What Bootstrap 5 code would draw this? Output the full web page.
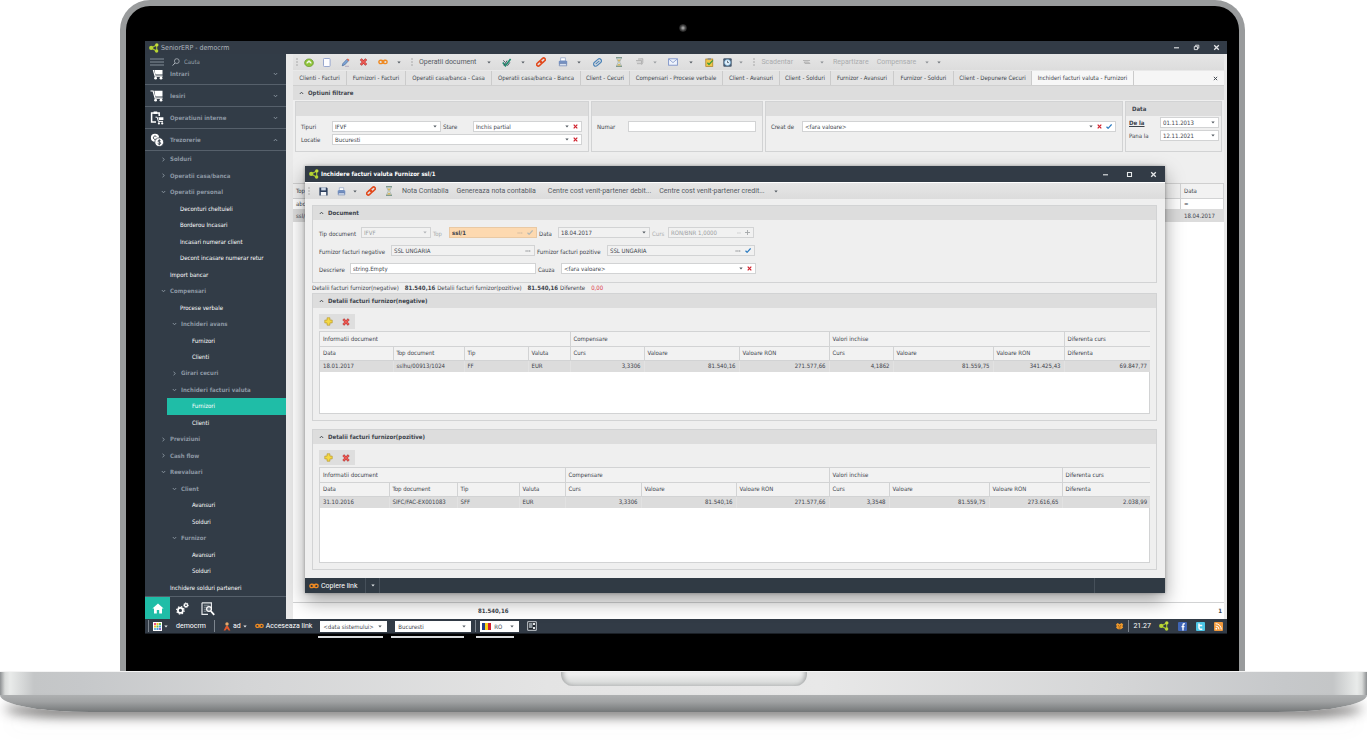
<!DOCTYPE html>
<html lang="ro">
<head>
<meta charset="utf-8">
<meta name="viewport" content="width=device-width, initial-scale=1">
<title>SeniorERP - democrm</title>
<link href="https://cdn.jsdelivr.net/npm/bootstrap@5.3.0/dist/css/bootstrap.min.css" rel="stylesheet">
<style>
:root{--ink:#3c434b;--dark:#323b46;--panel:#efefef;--head:#dddddd;--line:#d2d3d4;--teal:#1fbda7}
body{background:#fff;font-family:"DejaVu Sans Condensed","DejaVu Sans",sans-serif;font-size:6px;line-height:10px;color:var(--ink);overflow-x:hidden}
svg{display:block;flex:none}
button,a.plain{color:inherit;text-decoration:none}
.bare{border:0;background:none;padding:0;font:inherit;color:inherit;display:flex;align-items:center;justify-content:center;flex:none;white-space:nowrap}
.tight{gap:2px}
/* laptop */
.lid{margin:0 122px 0 120px;background:#000;border:6px solid #999b9c;border-bottom:0;border-radius:30px 30px 0 0;padding-bottom:33px}
.bezel{height:35px}
.camera{width:8px;height:8px;border-radius:50%;border:1px solid #2b2b2b;background:radial-gradient(#9a9a9a 0 20%,#555 50%,#333)}
.screen{height:597px;margin:0 12px 0 19px}
.shellrow{min-height:0}
.deck{height:24px;background:linear-gradient(90deg,#8d9092 0,#d9dbda 5px,#e9ebea 10px,#c4c6c7 34px,#c6c8ca 6%,#d4d5d6 18%,#e4e4e4 40%,#e8e8e8 60%,#d4d5d6 82%,#c6c8ca 94%,#c4c6c7 calc(100% - 34px),#e9ebea calc(100% - 10px),#d9dbda calc(100% - 5px),#8d9092 100%);border-top:1px solid #f4f4f4}
.notch{width:246px;height:14px;border-radius:0 0 12px 12px;background:linear-gradient(#f4f4f4,#dcdedd 70%,#c3c5c5);box-shadow:inset 6px 0 5px -4px #a2a4a5,inset -6px 0 5px -4px #a2a4a5}
.foot{height:17px;border-radius:0 0 90px 90px/0 0 17px 17px;background:linear-gradient(#aeb0b1,#a0a2a3 40%,#747778);box-shadow:0 8px 12px -4px rgba(40,38,36,.8),0 20px 20px -8px rgba(110,110,110,.3);margin-bottom:41px}
/* shell */
.titlebar{height:13px;background:var(--dark);color:#aeb5bd;font-size:7px;padding:0 1px 0 4px}
.winctl{width:20px;height:13px;color:#e6e8ea}
.side{width:141px;background:#323c47;color:#8c97a3;flex:none}
.findbox{height:16px;padding:0 5px}
.findbox input{background:none;border:0;color:#aab2bb;width:80px;padding:0;font:inherit;outline:0}
.findbox input::placeholder{color:#98a1ab;opacity:1}
.mods{list-style:none;margin:0;padding:0;overflow:hidden}
.mods a{height:22px;border-bottom:1px solid #56606b;padding:0 8px 0 5px;font-weight:700}
.mods li:first-child{height:15px;display:flex;flex-direction:column;justify-content:flex-end;overflow:hidden}
.mods li:first-child a{flex:none}
.mods .lbl{margin-left:6px}
.tree{list-style:none;margin:0;padding:0;display:grid;grid-auto-rows:1fr;flex:1 1 0;min-height:0}
.tree a{display:flex;align-items:center;height:100%;color:#fff;padding-left:25px;font-size:6px}
.tree .l2{padding-left:35px}.tree .l3{padding-left:47px}
.tree .grp{color:#8c97a3;font-weight:700;padding-left:16px}
.tree .grp.l2{padding-left:27px}
.tree .grp svg{margin-right:4px}
.tree .on{background:var(--teal);margin-left:22px;padding-left:25px}
.sidefoot{height:23px;border-top:1px solid #56606b}
.sidefoot .home{width:25px;height:23px;background:var(--teal)}
.sidefoot button{width:25px;height:23px}
/* main */
.main{background:#e9e9e9;position:relative;min-width:0;padding:0 3px 0 7px}
.tbar{height:16px;background:linear-gradient(#e6e6e6,#dcdcdc);color:#555b62}
.tbar,.dfoot,.status{font-family:Roboto,sans-serif;font-size:7px}
.s10{width:10px}.s14{width:14px}.s18{width:18px}.s22{width:22px}.s26{width:26px}
.grip{width:7px;height:8px;background:radial-gradient(circle,#a9a9a9 1px,transparent 1px) center/2px 3px;background-repeat:repeat-y;flex:none}
.off{color:#aaacae}
.tabs{height:15px;background:#f6f6f6;border-bottom:1px solid #cfcfcf;margin-top:1px}
.tabs button{background:#e3e3e3;border-right:1px solid #cbcbcb;height:14px}
.tabs .on{background:#f7f7f7}
.t49{width:49px}.t51{width:51px}.t54{width:54px}.t57{width:57px}.t59{width:59px}.t60{width:60px}.t63{width:63px}.t78{width:78px}.t86{width:86px}.t89{width:89px}.t93{width:93px}.t102{width:102px}
.ghead{height:14px;background:var(--head);font-weight:700;padding:0 6px}
.ghead svg{margin-right:4px}
.filters{background:var(--panel);height:84px;padding:1px 2px 0;gap:2px;border-bottom:1px solid #cfcfcf}
.box{border:1px solid var(--line);background:var(--panel);height:51px}
.w294{width:294px}.w172{width:172px}.w97{width:97px}
.box .rows{padding:5px 6px 0 5px;gap:2px}
.box.w97 .rows{padding:1px 2px 0 3px}
.fld{height:11px;background:#fff;border:1px solid var(--line);min-width:0;padding:0 3px 0 1px;gap:4px}
.fld .form-control,.fld .form-select{border:0;border-radius:0;background:none;padding:0 0 0 1px;margin:0;height:9px;min-height:0;line-height:9px;font:inherit;color:inherit;box-shadow:none;flex:1 1 0;min-width:0;width:auto}
.fld.ro{background:#f1f1f1}.fld.dis{background:#f1f1f1;color:#9b9ea1}
.fld.hot{background:#fdd9b0;border-color:#e9c9a4}
.f31{width:31px;flex:none}.f32{width:32px;padding-left:2px;flex:none}.d109{width:109px;flex:none}
/* background list */
.grid{width:100%;table-layout:fixed;margin:0;border-collapse:collapse;color:inherit}
.grid th,.grid td{font-weight:400;padding:0 3px;border-right:1px solid var(--line);white-space:nowrap;overflow:hidden;line-height:10px}
.grid th{background:#f2f2f2;border-bottom:1px solid var(--line)}
.list thead th{height:14px}.list td{height:11px;background:#fff}.list .pick td{background:#dcdcdc;height:13px;border-color:#dcdcdc}
.list .cdate{width:43px}
.total{height:17px;border-top:1px solid var(--line);background:#fff;font-weight:700;padding:0 2px 0 185px}
/* dialog */
.dlg{position:absolute;top:112px;left:19px;right:62px;bottom:26px;background:var(--panel);box-shadow:0 8px 18px rgba(0,0,0,.38),0 0 3px rgba(0,0,0,.3)}
.dtitle{height:17px;background:var(--dark);color:#fff;font-weight:700;padding:0 0 0 4px;border-bottom:1px solid #fff}
.dtitle .winctl{width:24px;height:16px}
.dbody{padding:6px 8px 8px 7px;min-height:0}
.card2{border:1px solid var(--line)}
.neg{height:128px}
.docform{padding:7px 6px 8px 6px;width:444px;gap:7px}
.docform label{padding-top:2px;flex:none;white-space:nowrap}
.docform .r{height:11px;gap:2px}
.docform .fld{flex:none}
.d70{width:70px}.d88{width:88px}.d92{width:92px}.d86{width:86px}.d144{width:144px}.d148{width:148px}.d186{width:186px}.d195{width:195px}
.l40{width:40px}.l14{width:14px}.l17{width:17px}.l70{width:70px}.l68{width:68px}.l29{width:29px}.l21{width:21px}
.sum{height:10px;gap:2px}
.sum b{margin-left:4px}
.addbar{width:36px;height:15px;background:#dedede;margin:6px 0 2px 6px}
.sheet{border:1px solid var(--line);background:#fff;margin:0 6px 6px}
.sheet .grid th{height:14px}
.sheet .grid td{height:12px;background:#dcdcdc;border-color:#e2e2e2}
.sheet .grid tr>:last-child{border-right:0}
.c73{width:73px}.c71{width:71px}.c64{width:64px}.c42{width:42px}.c74{width:74px}.c95{width:95px}.c90{width:90px}.c100{width:100px}.c86{width:86px}
.c69{width:69px}.c68{width:68px}.c62{width:62px}.c46{width:46px}.c76{width:76px}.c93{width:93px}.c60{width:60px}.c88{width:88px}
.dfoot{height:15px;background:#303a44;color:#fff;padding-left:4px}
.dfoot .cell{height:15px;border-right:1px solid #46505a}
.dfoot .tail{width:71px;height:15px;border-left:1px solid #46505a}
/* status bar */
.status{height:14px;background:var(--dark);color:#fff;padding-left:3px}
.status .fld{border-color:#fff;color:var(--ink);height:11px;flex:none;padding:0 4px 0 1px;gap:2px;font-family:"DejaVu Sans Condensed","DejaVu Sans",sans-serif;font-size:6px}
.bar1{width:1px;height:12px;background:#7d858e;flex:none}
.d67{width:67px}.d76{width:76px}.d39{width:39px}
.glow{height:5px;background:#000;padding:2px 0 0 173px;border-top:1px solid #1b2027}
.glow i{height:2px;background:#d6d8da}
.g65{width:65px}.g73{width:73px}.g38{width:38px}
</style>
</head>
<body>
<svg width="0" height="0" class="position-absolute" aria-hidden="true">
<symbol id="dn" viewBox="0 0 4 3"><path d="M.3 .6h3.400L2 2.500z" fill="#555c63"/></symbol>
<symbol id="dnw" viewBox="0 0 4 3"><path d="M.3 .6h3.400L2 2.500z" fill="#dfe3e6"/></symbol>
<symbol id="cu" viewBox="0 0 5 4"><path d="M.8 3L2.5 1.2 4.2 3" fill="none" stroke="currentColor" stroke-width=".9"/></symbol>
<symbol id="cd" viewBox="0 0 5 4"><path d="M.8 1L2.5 2.8 4.2 1" fill="none" stroke="currentColor" stroke-width=".9"/></symbol>
<symbol id="cr" viewBox="0 0 5 5"><path d="M1.5.8L3.4 2.5 1.5 4.2" fill="none" stroke="currentColor" stroke-width=".9"/></symbol>
<symbol id="x" viewBox="0 0 5 5"><path d="M.7.7l3.6 3.6M4.3.7L.7 4.3" stroke="#d0202c" stroke-width="1.2"/></symbol>
<symbol id="ok" viewBox="0 0 6 5"><path d="M.5 2.8L2.1 4.3 5.6.5" fill="none" stroke="#2a7ac0" stroke-width="1.2"/></symbol>
<symbol id="dots" viewBox="0 0 6 2"><path d="M.5 1h5" stroke="#7a7d80" stroke-width="1" stroke-dasharray="1.2 .6"/></symbol>
<symbol id="min" viewBox="0 0 7 7"><path d="M1 3.8h5" stroke="currentColor" stroke-width="1.1"/></symbol>
<symbol id="max" viewBox="0 0 7 7"><path d="M1.5 1.5h4v4h-4z" fill="none" stroke="currentColor" stroke-width="1.1"/></symbol>
<symbol id="rst" viewBox="0 0 7 7"><path d="M1.3 2.6h3.2v3H1.3zM2.6 2.4V1.2h3.2v3H4.7" fill="none" stroke="currentColor" stroke-width=".9"/></symbol>
<symbol id="cls" viewBox="0 0 7 7"><path d="M1.2 1.2l4.6 4.6M5.8 1.2L1.2 5.8" stroke="currentColor" stroke-width="1.3"/></symbol>
<symbol id="share" viewBox="0 0 10 10"><path d="M7.6 2L2.2 5l5.2 3M7.6 2l.2 6" fill="none" stroke="#a9c92c" stroke-width="1.1"/><circle cx="7.8" cy="1.9" r="1.7" fill="#c5de3c"/><circle cx="2.200" cy="4.9" r="2.100" fill="#b7d433"/><circle cx="7.6" cy="8" r="1.7" fill="#b7d433"/></symbol>
<symbol id="link" viewBox="0 0 10 6"><g fill="none" stroke="#ef8a22" stroke-width="1.4"><rect x=".9" y="1.2" width="4" height="3.4" rx="1.6"/><rect x="5.1" y="1.2" width="4" height="3.4" rx="1.6"/><path d="M3.4 2.9h3.2"/></g></symbol>
<symbol id="cart" viewBox="0 0 14 12"><path d="M.5 1h2.6l2 7.2h7.5" fill="none" stroke="#fff" stroke-width="1.2"/><path d="M4.3.8h8.2v5.8H5.4z" fill="#fff"/><circle cx="5.6" cy="10.2" r="1.4" fill="#fff"/><circle cx="11" cy="10.2" r="1.4" fill="#fff"/></symbol>
<symbol id="add" viewBox="0 0 9 9"><path d="M3.100.8h2.800v2.300h2.300v2.800H5.900v2.300H3.100V5.900H.8V3.100h2.300z" fill="#f5d944" stroke="#b89a34" stroke-width=".7"/></symbol>
<symbol id="del" viewBox="0 0 9 9"><path d="M1.4 1.4l6.2 6.2M7.6 1.4L1.4 7.6" stroke="#b03a3a" stroke-width="2.800"/><path d="M1.600 1.600l5.800 5.800M7.400 1.600L1.600 7.400" stroke="#ee5a52" stroke-width="1.700"/></symbol>
<symbol id="rlink" viewBox="0 0 10 10"><g transform="rotate(-42 5 5)" fill="none" stroke="#e2491c" stroke-width="1.6"><rect x="-.2" y="3.4" width="5.6" height="3.2" rx="1.6"/><rect x="4.6" y="3.4" width="5.6" height="3.2" rx="1.6"/></g></symbol>
<symbol id="prn" viewBox="0 0 10 10"><path d="M2.600.8h4.800v4H2.600z" fill="#fff" stroke="#8da0c4" stroke-width=".7"/><path d="M.8 4.200l1.400-.8h5.600l1.400.8v3.400H.8z" fill="#7490c0"/><path d="M1.800 6.600h6.400l.6 2.200H1.200z" fill="#dfe8f5" stroke="#5a72a2" stroke-width=".6"/></symbol>
<symbol id="hour" viewBox="0 0 8 10"><path d="M1 .7h6M1 9.3h6" stroke="#7d9a8c" stroke-width="1.2"/><path d="M1.6 1.2h4.8L4.6 5l1.8 3.8H1.6L3.4 5z" fill="#d8e6ea" stroke="#8f9d98" stroke-width=".6"/><path d="M2.4 2.6h3.2L4 4.9zM2 8.6L4 6.4l2 2.2z" fill="#d9b450"/></symbol>
<symbol id="glass" viewBox="0 0 8 8"><circle cx="4.8" cy="3.1" r="2.4" fill="none" stroke="#aeb5bd" stroke-width=".8"/><path d="M3 5L.6 7.6" stroke="#aeb5bd" stroke-width="1"/></symbol>
</svg>

<div class="lid">
  <div class="bezel d-flex justify-content-center align-items-center pt-2"><span class="camera"></span></div>
  <div class="screen d-flex flex-column">
    <header class="titlebar d-flex align-items-center tight">
      <svg width="10" height="10"><use href="#share"/></svg><span>SeniorERP - democrm</span>
      <div class="ms-auto d-flex">
      <button class="bare winctl" aria-label="Minimizeaza"><svg width="7" height="7"><use href="#min"/></svg></button>
      <button class="bare winctl" aria-label="Restaureaza"><svg width="7" height="7"><use href="#rst"/></svg></button>
      <button class="bare winctl" aria-label="Inchide"><svg width="7" height="7"><use href="#cls"/></svg></button>
      </div>
    </header>
    <div class="shellrow d-flex flex-grow-1">
      <nav class="side d-flex flex-column">
        <div class="findbox d-flex align-items-center flex-shrink-0">
          <svg width="14" height="8" viewBox="0 0 14 8"><path d="M0 1h14M0 4h14M0 7h14" stroke="#8f99a3" stroke-width=".9"/></svg>
          <svg class="ms-2 me-1" width="8" height="8"><use href="#glass"/></svg>
          <input type="search" placeholder="Cauta" aria-label="Cauta">
        </div>
        <ul class="mods flex-shrink-0">
          <li><a href="#" class="plain d-flex align-items-center"><svg width="14" height="12"><use href="#cart"/></svg><span class="lbl">Intrari</span><svg class="ms-auto" width="5" height="4"><use href="#cd"/></svg></a></li>
          <li><a href="#" class="plain d-flex align-items-center"><svg width="14" height="12"><use href="#cart"/></svg><span class="lbl">Iesiri</span><svg class="ms-auto" width="5" height="4"><use href="#cd"/></svg></a></li>
          <li><a href="#" class="plain d-flex align-items-center"><svg width="14" height="14" viewBox="0 0 14 14"><path d="M6 11H1.6V2h7.6v3" fill="none" stroke="#fff" stroke-width="1.5"/><path d="M3.6.5h3.6v2.4H3.6z" fill="#fff"/><path d="M5.500 6.200h1.700l1.200 4.200h4.600" fill="none" stroke="#fff" stroke-width="1"/><path d="M8.400 6.200h5v2.800H9z" fill="#fff"/><circle cx="8.9" cy="12.4" r="1.1" fill="#fff"/><circle cx="12.2" cy="12.4" r="1.1" fill="#fff"/></svg><span class="lbl">Operatiuni interne</span><svg class="ms-auto" width="5" height="4"><use href="#cd"/></svg></a></li>
          <li><a href="#" class="plain d-flex align-items-center"><svg width="14" height="14" viewBox="0 0 14 14"><circle cx="5" cy="4.8" r="4.1" fill="#fff"/><circle cx="9.2" cy="9.2" r="4.4" fill="#fff" stroke="#323c47" stroke-width=".8"/><path d="M6.4 3.6c-1.3-1.2-3-.4-3 1.1s1.2 2 2.2 1.5" fill="none" stroke="#323c47"/><path d="M10.7 7.8c-.9-.8-2.8-.7-2.7.4.1 1 2.7.7 2.7 2s-2.200 1.200-3 .2M9.300 6.300v6" fill="none" stroke="#323c47" stroke-width=".9"/></svg><span class="lbl">Trezorerie</span><svg class="ms-auto" width="5" height="4"><use href="#cu"/></svg></a></li>
        </ul>
        <ul class="tree">
          <li><a class="plain grp" href="#"><svg width="5" height="5"><use href="#cr"/></svg>Solduri</a></li>
          <li><a class="plain grp" href="#"><svg width="5" height="5"><use href="#cr"/></svg>Operatii casa/banca</a></li>
          <li><a class="plain grp" href="#"><svg width="5" height="4"><use href="#cd"/></svg>Operatii personal</a></li>
          <li><a class="plain l2" href="#">Deconturi cheltuieli</a></li>
          <li><a class="plain l2" href="#">Borderou Incasari</a></li>
          <li><a class="plain l2" href="#">Incasari numerar client</a></li>
          <li><a class="plain l2" href="#">Decont incasare numerar retur</a></li>
          <li><a class="plain" href="#">Import bancar</a></li>
          <li><a class="plain grp" href="#"><svg width="5" height="4"><use href="#cd"/></svg>Compensari</a></li>
          <li><a class="plain l2" href="#">Procese verbale</a></li>
          <li><a class="plain grp l2" href="#"><svg width="5" height="4"><use href="#cd"/></svg>Inchideri avans</a></li>
          <li><a class="plain l3" href="#">Furnizori</a></li>
          <li><a class="plain l3" href="#">Clienti</a></li>
          <li><a class="plain grp l2" href="#"><svg width="5" height="5"><use href="#cr"/></svg>Girari cecuri</a></li>
          <li><a class="plain grp l2" href="#"><svg width="5" height="4"><use href="#cd"/></svg>Inchideri facturi valuta</a></li>
          <li><a class="plain on" href="#" aria-current="page">Furnizori</a></li>
          <li><a class="plain l3" href="#">Clienti</a></li>
          <li><a class="plain grp" href="#"><svg width="5" height="5"><use href="#cr"/></svg>Previziuni</a></li>
          <li><a class="plain grp" href="#"><svg width="5" height="5"><use href="#cr"/></svg>Cash flow</a></li>
          <li><a class="plain grp" href="#"><svg width="5" height="4"><use href="#cd"/></svg>Reevaluari</a></li>
          <li><a class="plain grp l2" href="#"><svg width="5" height="4"><use href="#cd"/></svg>Client</a></li>
          <li><a class="plain l3" href="#">Avansuri</a></li>
          <li><a class="plain l3" href="#">Solduri</a></li>
          <li><a class="plain grp l2" href="#"><svg width="5" height="4"><use href="#cd"/></svg>Furnizor</a></li>
          <li><a class="plain l3" href="#">Avansuri</a></li>
          <li><a class="plain l3" href="#">Solduri</a></li>
          <li><a class="plain" href="#">Inchidere solduri parteneri</a></li>
        </ul>
        <div class="sidefoot d-flex flex-shrink-0">
          <button class="bare home" aria-label="Acasa"><svg width="12" height="11" viewBox="0 0 12 11"><path d="M6 .4L.4 5.600h1.600V10.600h2.800V7h2.400v3.600H10V5.600h1.600z" fill="#fff"/></svg></button>
          <button class="bare" aria-label="Setari"><svg width="13" height="13" viewBox="0 0 13 13"><g fill="none" stroke="#fff"><circle cx="4.400" cy="8.400" r="2.500" stroke-width="1.800"/><circle cx="4.400" cy="8.400" r="3.800" stroke-width="1.100" stroke-dasharray="1.500 1.480"/><circle cx="10" cy="3.200" r="1.500" stroke-width="1.300"/><circle cx="10" cy="3.200" r="2.400" stroke-width=".9" stroke-dasharray="1 .880"/></g></svg></button>
          <button class="bare" aria-label="Rapoarte"><svg width="14" height="14" viewBox="0 0 14 14"><path d="M1 .8h9.400V8M7 12.400H1V.8" fill="none" stroke="#e4e7ea" stroke-width="1.200"/><path d="M2.800 3.200h5.800M2.800 5.200h3M2.800 7.200h2.400M2.800 9.200h2.600" stroke="#aab2b9" stroke-width=".8"/><circle cx="8" cy="7" r="2.400" fill="#6d7781" stroke="#fff" stroke-width="1.200"/><path d="M9.800 9l3.400 3.800" stroke="#fff" stroke-width="1.800"/></svg></button>
        </div>
      </nav>

      <main class="main flex-grow-1 d-flex flex-column">
        <div class="tbar d-flex align-items-center flex-shrink-0">
          <span class="grip"></span>
          <button class="bare s18" aria-label="Actualizeaza"><svg width="10" height="9" viewBox="0 0 10 9"><ellipse cx="5" cy="4.800" rx="4.400" ry="3.900" fill="#8fc43a" stroke="#5b8a22" stroke-width=".6"/><path d="M3 5.600a2 2 0 1 1 4 0M5 2.200v2.400" fill="none" stroke="#fff" stroke-width="1.100"/></svg></button>
          <button class="bare s18" aria-label="Nou"><svg width="8" height="9" viewBox="0 0 8 9"><rect x=".5" y=".5" width="6.600" height="8" rx=".8" fill="#fdfdff" stroke="#8e9fc9" stroke-width=".9"/></svg></button>
          <button class="bare s18" aria-label="Modifica"><svg width="9" height="9" viewBox="0 0 9 9"><path d="M1.200 7.800L2 5.400 6 1.200l1.600 1.600L3.500 7z" fill="#7ea6d8" stroke="#36588c" stroke-width=".6"/><path d="M5.600 1.600L6.800.4l1.700 1.700-1.200 1z" fill="#de6a52"/><path d="M4 8.300h4" stroke="#98a" stroke-width=".6"/></svg></button>
          <button class="bare s18" aria-label="Sterge"><svg width="9" height="8"><use href="#del"/></svg></button>
          <button class="bare s22" aria-label="Link"><svg width="10" height="6"><use href="#link"/></svg></button>
          <button class="bare s10" aria-label="Meniu link"><svg width="4" height="3"><use href="#dn"/></svg></button>
          <span class="grip ms-1"></span>
          <button class="bare px-1">Operatii document</button>
          <button class="bare s18" aria-label="Meniu operatii"><svg width="4" height="3"><use href="#dn"/></svg></button>
          <button class="bare s18" aria-label="Valideaza"><svg width="10" height="9" viewBox="0 0 10 9"><path d="M.8 4.400L3.400 7.800 8.600 1" fill="none" stroke="#1d8a6d" stroke-width="1.600"/><path d="M1.200 2.400l2.200 2M5.400 7.800l2.400-3.400M2 7.600l3-5" stroke="#3a4b57" stroke-width=".9"/></svg></button>
          <button class="bare s14" aria-label="Meniu validare"><svg width="4" height="3"><use href="#dn"/></svg></button>
          <button class="bare s22" aria-label="Leaga"><svg width="10" height="10"><use href="#rlink"/></svg></button>
          <button class="bare s22" aria-label="Tipareste"><svg width="10" height="10"><use href="#prn"/></svg></button>
          <button class="bare s10" aria-label="Meniu tiparire"><svg width="4" height="3"><use href="#dn"/></svg></button>
          <button class="bare s26" aria-label="Atasamente"><svg width="9" height="9" viewBox="0 0 9 9"><g transform="rotate(-42 4.500 4.500)" fill="none" stroke="#4d84b8"><rect x="0" y="2.400" width="9" height="4.200" rx="2.100" stroke-width="1.200"/><path d="M2 4.500h5" stroke-width="1.200"/></g></svg></button>
          <button class="bare s18" aria-label="Istoric"><svg width="8" height="10"><use href="#hour"/></svg></button>
          <button class="bare s22" aria-label="Flux"><svg width="9" height="8" viewBox="0 0 9 8"><path d="M1 2.500h5.500v3.200H2M3 1l4.800-.3v4L6.500 6.800" fill="#d3d3d3" stroke="#ababab" stroke-width=".8"/></svg></button>
          <button class="bare s10" aria-label="Meniu flux"><svg width="4" height="3" opacity=".5"><use href="#dn"/></svg></button>
          <button class="bare s26" aria-label="Email"><svg width="10" height="8" viewBox="0 0 10 8"><rect x=".6" y=".8" width="8.800" height="6.400" fill="#eef3fc" stroke="#7d93c8" stroke-width=".9"/><path d="M1 1.200l4 3.400 4-3.400" fill="none" stroke="#7d93c8" stroke-width=".8"/></svg></button>
          <button class="bare s10" aria-label="Meniu email"><svg width="4" height="3"><use href="#dn"/></svg></button>
          <button class="bare s26" aria-label="Sarcini"><svg width="9" height="9" viewBox="0 0 9 9"><rect x=".8" y="1" width="7" height="7.400" fill="#f0c64a" stroke="#a77d22" stroke-width=".7"/><rect x="2.600" y=".2" width="3.400" height="1.600" fill="#8a8d90"/><path d="M2.400 4.800L4 6.500 7.800 2.400" fill="none" stroke="#3b9a3c" stroke-width="1.300"/></svg></button>
          <button class="bare s10" aria-label="Alarma"><svg width="9" height="9" viewBox="0 0 9 9"><rect x=".3" y=".3" width="8.400" height="8.400" rx="1" fill="#47596e"/><circle cx="4.500" cy="4.500" r="3" fill="#e3f1fb" stroke="#6fb1dd" stroke-width=".6"/><path d="M4.500 2.800v1.800h1.400" fill="none" stroke="#2c3b4c" stroke-width=".7"/></svg></button>
          <button class="bare s18" aria-label="Meniu alarma"><svg width="4" height="3" opacity=".6"><use href="#dn"/></svg></button>
          <span class="grip"></span>
          <button class="bare off px-1" disabled>Scadentar</button>
          <button class="bare off s18" disabled aria-label="Plata"><svg width="9" height="6" viewBox="0 0 9 6"><path d="M1 1.500h7M2 3h4.500L8 4.500H3z" fill="#ccc" stroke="#b0b0b0" stroke-width=".9"/></svg></button>
          <button class="bare off s14" disabled aria-label="Meniu plata"><svg width="4" height="3" opacity=".6"><use href="#dn"/></svg></button>
          <button class="bare off px-1" disabled>Repartizare</button>
          <button class="bare off px-1" disabled>Compensare</button>
          <button class="bare off s14" disabled aria-label="Meniu compensare"><svg width="4" height="3" opacity=".6"><use href="#dn"/></svg></button>
          <button class="bare s10" aria-label="Mai mult"><svg width="4" height="3" opacity=".8"><use href="#dn"/></svg></button>
        </div>
        <div class="tabs d-flex flex-shrink-0">
          <button class="bare t54">Clienti - Facturi</button><button class="bare t59">Furnizori - Facturi</button><button class="bare t86">Operatii casa/banca - Casa</button><button class="bare t89">Operatii casa/banca - Banca</button><button class="bare t49">Client - Cecuri</button><button class="bare t93">Compensari - Procese verbale</button><button class="bare t57">Client - Avansuri</button><button class="bare t51">Client - Solduri</button><button class="bare t63">Furnizor - Avansuri</button><button class="bare t60">Furnizor - Solduri</button><button class="bare t78">Client - Depunere Cecuri</button><button class="bare t102 on">Inchideri facturi valuta - Furnizori</button>
          <button class="bare s18 ms-auto bg-transparent border-0" aria-label="Inchide fila"><svg width="5" height="5" viewBox="0 0 7 7"><use href="#cls" width="7" height="7"/></svg></button>
        </div>
        <div class="ghead d-flex align-items-center flex-shrink-0"><svg width="5" height="4"><use href="#cu"/></svg>Optiuni filtrare</div>
        <div class="filters d-flex flex-shrink-0">
          <section class="box w294 flex-shrink-0">
            <div class="ghead"></div>
            <div class="rows d-flex flex-column">
              <div class="d-flex align-items-center"><label class="f31" for="tip">Tipuri</label>
                <div class="fld d109 d-flex align-items-center"><select id="tip" class="form-select"><option>IFVF</option></select><svg width="4" height="3"><use href="#dn"/></svg></div>
                <label class="f32" for="stare">Stare</label>
                <div class="fld d-flex align-items-center flex-fill"><select id="stare" class="form-select"><option>Inchis partial</option></select><svg width="4" height="3"><use href="#dn"/></svg><button class="bare" aria-label="Sterge stare"><svg width="5" height="5"><use href="#x"/></svg></button></div></div>
              <div class="d-flex align-items-center"><label class="f31" for="loc">Locatie</label>
                <div class="fld d-flex align-items-center flex-fill"><select id="loc" class="form-select"><option>Bucuresti</option></select><svg width="4" height="3"><use href="#dn"/></svg><button class="bare" aria-label="Sterge locatie"><svg width="5" height="5"><use href="#x"/></svg></button></div></div>
            </div>
          </section>
          <section class="box w172 flex-shrink-0">
            <div class="ghead"></div>
            <div class="rows d-flex flex-column"><div class="d-flex align-items-center"><label class="f31" for="nr">Numar</label><div class="fld d-flex flex-fill"><input id="nr" class="form-control"></div></div></div>
          </section>
          <section class="box flex-fill">
            <div class="ghead"></div>
            <div class="rows d-flex flex-column"><div class="d-flex align-items-center"><label class="f31" for="creat">Creat de</label><div class="fld d-flex align-items-center flex-fill"><select id="creat" class="form-select"><option>&lt;fara valoare&gt;</option></select><svg width="4" height="3"><use href="#dn"/></svg><button class="bare" aria-label="Sterge"><svg width="5" height="5"><use href="#x"/></svg></button><button class="bare" aria-label="Aplica"><svg width="6" height="5"><use href="#ok"/></svg></button></div></div></div>
          </section>
          <section class="box w97 flex-shrink-0">
            <div class="ghead d-flex align-items-center">Data</div>
            <div class="rows d-flex flex-column">
              <div class="d-flex align-items-center"><label class="f31 fw-bold text-decoration-underline" for="dela">De la</label><div class="fld d-flex align-items-center flex-fill"><input id="dela" class="form-control" value="01.11.2013"><svg width="4" height="3"><use href="#dn"/></svg></div></div>
              <div class="d-flex align-items-center"><label class="f31" for="pana">Pana la</label><div class="fld d-flex align-items-center flex-fill"><input id="pana" class="form-control" value="12.11.2021"><svg width="4" height="3"><use href="#dn"/></svg></div></div>
            </div>
          </section>
        </div>
        <div class="flex-grow-1 bg-white">
          <table class="grid list">
            <colgroup><col><col class="cdate"></colgroup>
            <thead><tr><th>Top</th><th>Data</th></tr></thead>
            <tbody><tr><td>abc</td><td>=</td></tr><tr class="pick"><td>ssl/1</td><td>18.04.2017</td></tr></tbody>
          </table>
        </div>
        <div class="total d-flex align-items-center justify-content-between flex-shrink-0"><span>81.540,16</span><span>1</span></div>

        <div class="dlg d-flex flex-column" role="dialog" aria-labelledby="dt">
          <div class="dtitle d-flex align-items-center flex-shrink-0 tight">
            <svg width="10" height="10"><use href="#share"/></svg><span id="dt">Inchidere facturi valuta Furnizor ssl/1</span>
            <div class="ms-auto d-flex">
            <button class="bare winctl" aria-label="Minimizeaza"><svg width="7" height="7"><use href="#min"/></svg></button>
            <button class="bare winctl" aria-label="Maximizeaza"><svg width="7" height="7"><use href="#max"/></svg></button>
            <button class="bare winctl" aria-label="Inchide"><svg width="7" height="7"><use href="#cls"/></svg></button>
            </div>
          </div>
          <div class="tbar d-flex align-items-center flex-shrink-0">
            <span class="grip"></span>
            <button class="bare s22" aria-label="Salveaza"><svg width="9" height="9" viewBox="0 0 9 9"><path d="M.4.4h7.400l.8.800v7.400H.4z" fill="#2b3e5c"/><path d="M2.200.4h4.600v3H2.200z" fill="#c9d4e4"/><path d="M1.800 5h5.400v3.600H1.800z" fill="#f4f6f9"/></svg></button>
            <button class="bare s14" aria-label="Tipareste"><svg width="9" height="9"><use href="#prn"/></svg></button>
            <button class="bare s14" aria-label="Meniu tiparire"><svg width="4" height="3"><use href="#dn"/></svg></button>
            <button class="bare s18" aria-label="Leaga"><svg width="10" height="10"><use href="#rlink"/></svg></button>
            <button class="bare s18" aria-label="Istoric"><svg width="8" height="10"><use href="#hour"/></svg></button>
            <button class="bare px-1">Nota Contabila</button>
            <button class="bare px-1">Genereaza nota contabila</button>
            <button class="bare ps-2 pe-1">Centre cost venit-partener debit...</button>
            <button class="bare px-1">Centre cost venit-partener credit...</button>
            <button class="bare s14" aria-label="Mai mult"><svg width="4" height="3"><use href="#dn"/></svg></button>
          </div>
          <div class="dbody d-flex flex-column flex-grow-1">
            <section class="card2">
              <div class="ghead d-flex align-items-center"><svg width="5" height="4"><use href="#cu"/></svg>Document</div>
              <div class="docform d-flex flex-column">
                <div class="r d-flex">
                  <label class="l40" for="a1">Tip document</label><div class="fld dis d70 d-flex align-items-center"><select id="a1" class="form-select" disabled><option>IFVF</option></select><svg width="4" height="3" opacity=".4"><use href="#dn"/></svg></div>
                  <label class="l14 off" for="a2">Top</label><div class="fld hot d88 d-flex align-items-center"><input id="a2" class="form-control fw-bold" value="ssl/1"><svg width="6" height="2" opacity=".4"><use href="#dots"/></svg><svg width="6" height="5" opacity=".35"><use href="#ok"/></svg></div>
                  <label class="l17" for="a3">Data</label><div class="fld ro d92 d-flex align-items-center"><input id="a3" class="form-control" value="18.04.2017"><svg width="4" height="3"><use href="#dn"/></svg></div>
                  <label class="l14 off" for="a4">Curs</label><div class="fld dis d86 d-flex align-items-center"><input id="a4" class="form-control" value="RON/BNR 1,0000" disabled><svg width="4" height="2" opacity=".6"><use href="#dots"/></svg><svg width="5" height="5" viewBox="0 0 5 5"><path d="M0 2.500h5M2.500 0v5" stroke="#a3a6a8" stroke-width=".9"/></svg></div>
                </div>
                <div class="r d-flex">
                  <label class="l70" for="b1">Furnizor facturi negative</label><div class="fld ro d144 d-flex align-items-center"><input id="b1" class="form-control" value="SSL UNGARIA"><svg width="6" height="2"><use href="#dots"/></svg></div>
                  <label class="l68" for="b2">Furnizor facturi pozitive</label><div class="fld ro d148 d-flex align-items-center"><input id="b2" class="form-control" value="SSL UNGARIA"><svg width="6" height="2"><use href="#dots"/></svg><svg width="6" height="5"><use href="#ok"/></svg></div>
                </div>
                <div class="r d-flex">
                  <label class="l29" for="c1">Descriere</label><div class="fld d186 d-flex align-items-center"><input id="c1" class="form-control" value="string.Empty"></div>
                  <label class="l21" for="c2">Cauza</label><div class="fld d195 d-flex align-items-center"><select id="c2" class="form-select"><option>&lt;fara valoare&gt;</option></select><svg width="4" height="3"><use href="#dn"/></svg><button class="bare" aria-label="Sterge cauza"><svg width="5" height="5"><use href="#x"/></svg></button></div>
                </div>
              </div>
            </section>
            <div class="sum d-flex align-items-center flex-shrink-0"><span>Detalii facturi furnizor(negative)</span><b>81.540,16</b><span>Detalii facturi furnizor(pozitive)</span><b>81.540,16</b><span>Diferente</span><span class="text-danger ms-1">0,00</span></div>
            <section class="card2 neg d-flex flex-column flex-shrink-0">
              <div class="ghead d-flex align-items-center flex-shrink-0"><svg width="5" height="4"><use href="#cu"/></svg>Detalii facturi furnizor(negative)</div>
              <div class="addbar d-flex flex-shrink-0"><button class="bare s18" aria-label="Adauga"><svg width="9" height="9"><use href="#add"/></svg></button><button class="bare s18" aria-label="Sterge"><svg width="8" height="8"><use href="#del"/></svg></button></div>
              <div class="sheet flex-grow-1">
                <table class="grid">
                  <colgroup><col class="c73"><col class="c71"><col class="c64"><col class="c42"><col class="c74"><col class="c95"><col class="c90"><col class="c64"><col class="c100"><col class="c71"><col class="c86"></colgroup>
                  <thead><tr><th colspan="4">Informatii document</th><th colspan="3">Compensare</th><th colspan="3">Valori inchise</th><th>Diferenta curs</th></tr>
                  <tr><th>Data</th><th>Top document</th><th>Tip</th><th>Valuta</th><th>Curs</th><th>Valoare</th><th>Valoare RON</th><th>Curs</th><th>Valoare</th><th>Valoare RON</th><th>Diferenta</th></tr></thead>
                  <tbody><tr><td>18.01.2017</td><td>sslhu/00913/1024</td><td>FF</td><td>EUR</td><td class="text-end">3,3306</td><td class="text-end">81.540,16</td><td class="text-end">271.577,66</td><td class="text-end">4,1862</td><td class="text-end">81.559,75</td><td class="text-end">341.425,43</td><td class="text-end">69.847,77</td></tr></tbody>
                </table>
              </div>
            </section>
            <section class="card2 d-flex flex-column flex-grow-1 mt-2">
              <div class="ghead d-flex align-items-center flex-shrink-0"><svg width="5" height="4"><use href="#cu"/></svg>Detalii facturi furnizor(pozitive)</div>
              <div class="addbar d-flex flex-shrink-0"><button class="bare s18" aria-label="Adauga"><svg width="9" height="9"><use href="#add"/></svg></button><button class="bare s18" aria-label="Sterge"><svg width="8" height="8"><use href="#del"/></svg></button></div>
              <div class="sheet flex-grow-1">
                <table class="grid">
                  <colgroup><col class="c69"><col class="c68"><col class="c62"><col class="c46"><col class="c76"><col class="c95"><col class="c93"><col class="c60"><col class="c100"><col class="c73"><col class="c88"></colgroup>
                  <thead><tr><th colspan="4">Informatii document</th><th colspan="3">Compensare</th><th colspan="3">Valori inchise</th><th>Diferenta curs</th></tr>
                  <tr><th>Data</th><th>Top document</th><th>Tip</th><th>Valuta</th><th>Curs</th><th>Valoare</th><th>Valoare RON</th><th>Curs</th><th>Valoare</th><th>Valoare RON</th><th>Diferenta</th></tr></thead>
                  <tbody><tr><td>31.10.2016</td><td>SIFC/FAC-EX001083</td><td>SFF</td><td>EUR</td><td class="text-end">3,3306</td><td class="text-end">81.540,16</td><td class="text-end">271.577,66</td><td class="text-end">3,3548</td><td class="text-end">81.559,75</td><td class="text-end">273.616,65</td><td class="text-end">2.038,99</td></tr></tbody>
                </table>
              </div>
            </section>
          </div>
          <div class="dfoot d-flex align-items-center flex-shrink-0">
            <button class="bare cell tight pe-2"><svg width="10" height="6"><use href="#link"/></svg>Copiere link</button>
            <button class="bare cell s14" aria-label="Meniu copiere"><svg width="4" height="3"><use href="#dnw"/></svg></button>
            <span class="tail ms-auto"></span>
          </div>
        </div>
      </main>
    </div>
    <footer class="status d-flex align-items-center flex-shrink-0">
      <span class="bar1 me-1"></span>
      <button class="bare tight" aria-label="Module"><svg width="9" height="9" viewBox="0 0 9 9"><rect width="9" height="9" fill="#fff"/><path d="M1 1h2v2H1z" fill="#e58"/><path d="M3.500 1h2v2h-2zM1 3.500h2v2H1z" fill="#f3c12e"/><path d="M6 1h2v2H6zM3.500 3.500h2v2h-2z" fill="#6bbf4a"/><path d="M6 3.500h2v2H6zM3.500 6h2v2h-2z" fill="#4b9fe0"/><path d="M1 6h2v2H1z" fill="#7bd"/><path d="M6 6h2v2H6z" fill="#8a6cc8"/></svg><svg width="4" height="3"><use href="#dnw"/></svg></button>
      <span class="ms-2">democrm</span><span class="bar1 mx-2"></span>
      <button class="bare tight"><svg width="8" height="9" viewBox="0 0 8 9"><circle cx="4" cy="2" r="1.700" fill="#e7a86a"/><path d="M.6 8.600L3 4h2l2.400 4.600H5.600L4 6.400 2.400 8.600z" fill="#e2582c"/></svg>ad<svg width="4" height="3"><use href="#dnw"/></svg></button>
      <button class="bare ms-2 tight"><svg width="9" height="6"><use href="#link"/></svg>Acceseaza link</button>
      <div class="fld d67 d-flex align-items-center ms-2"><select class="form-select" aria-label="Data"><option>&lt;data sistemului&gt;</option></select><svg width="4" height="3"><use href="#dn"/></svg></div>
      <div class="fld d76 d-flex align-items-center ms-2"><select class="form-select" aria-label="Locatie"><option>Bucuresti</option></select><svg width="4" height="3"><use href="#dn"/></svg></div>
      <span class="bar1 mx-1"></span>
      <div class="fld d39 d-flex align-items-center"><svg width="9" height="7" viewBox="0 0 9 7"><path d="M0 0h3v7H0z" fill="#23408e"/><path d="M3 0h3v7H3z" fill="#f7d117"/><path d="M6 0h3v7H6z" fill="#cf2031"/></svg><select class="form-select" aria-label="Limba"><option>RO</option></select><svg width="4" height="3"><use href="#dn"/></svg></div>
      <button class="bare ms-2" aria-label="Ecran complet"><svg width="10" height="10" viewBox="0 0 10 10"><path d="M.7.700h8.600v8.600H.7z" fill="#20262d" stroke="#c9ced3"/><path d="M2 2h3.500v5H2z" fill="#8d959c"/><path d="M6 2h2v2H6zM6 6h2v2H6z" fill="#e5e8ea"/></svg></button>
      <div class="ms-auto d-flex align-items-center">
        <button class="bare s18" aria-label="Notificari"><svg width="9" height="8" viewBox="0 0 9 8"><path d="M1 2.600L2.600 1l2 1.200L6.600 1l1.600 1.600-.8 1.600.8 1.400L6 7.300H3L1 5.600l.8-1.400z" fill="#f09a2c"/><path d="M3.200 3.200l.8 1.400M5.800 3.200L5 4.600M3.600 6h2" stroke="#7d4a12" stroke-width=".8"/></svg></button>
        <span class="bar1"></span><span class="px-1">21.27</span>
        <button class="bare s18" aria-label="Distribuie"><svg width="10" height="10"><use href="#share"/></svg></button>
        <a class="bare s18" href="#" aria-label="Facebook"><svg width="9" height="9" viewBox="0 0 9 9"><rect width="9" height="9" rx="1" fill="#3f65b5"/><path d="M6.800 1.800H6c-.8 0-1 .5-1 1.200v5.500M3.500 4.600h3" fill="none" stroke="#fff" stroke-width="1.400"/></svg></a>
        <a class="bare s18" href="#" aria-label="Twitter"><svg width="9" height="9" viewBox="0 0 9 9"><rect width="9" height="9" rx="1" fill="#4cc6e6"/><path d="M3 1.500v4.200c0 1 .6 1.500 1.500 1.500h1.800M3 3.500h3.200" fill="none" stroke="#fff" stroke-width="1.500"/></svg></a>
        <a class="bare s18" href="#" aria-label="RSS"><svg width="9" height="9" viewBox="0 0 9 9"><rect width="9" height="9" rx="1" fill="#f29a3c"/><circle cx="2.300" cy="6.700" r=".9" fill="#fff"/><path d="M1.600 4a3.400 3.400 0 0 1 3.400 3.400M1.600 1.700a5.700 5.700 0 0 1 5.700 5.700" fill="none" stroke="#fff" stroke-width="1"/></svg></a>
      </div>
    </footer>
    <div class="glow d-flex flex-shrink-0 gap-2"><i class="g65"></i><i class="g73"></i><i class="g38 ms-1"></i></div>
  </div>
</div>
<div class="deck d-flex justify-content-center"><div class="notch"></div></div>
<div class="foot"></div>
<script src="https://cdn.jsdelivr.net/npm/bootstrap@5.3.0/dist/js/bootstrap.bundle.min.js"></script>
</body>
</html>
